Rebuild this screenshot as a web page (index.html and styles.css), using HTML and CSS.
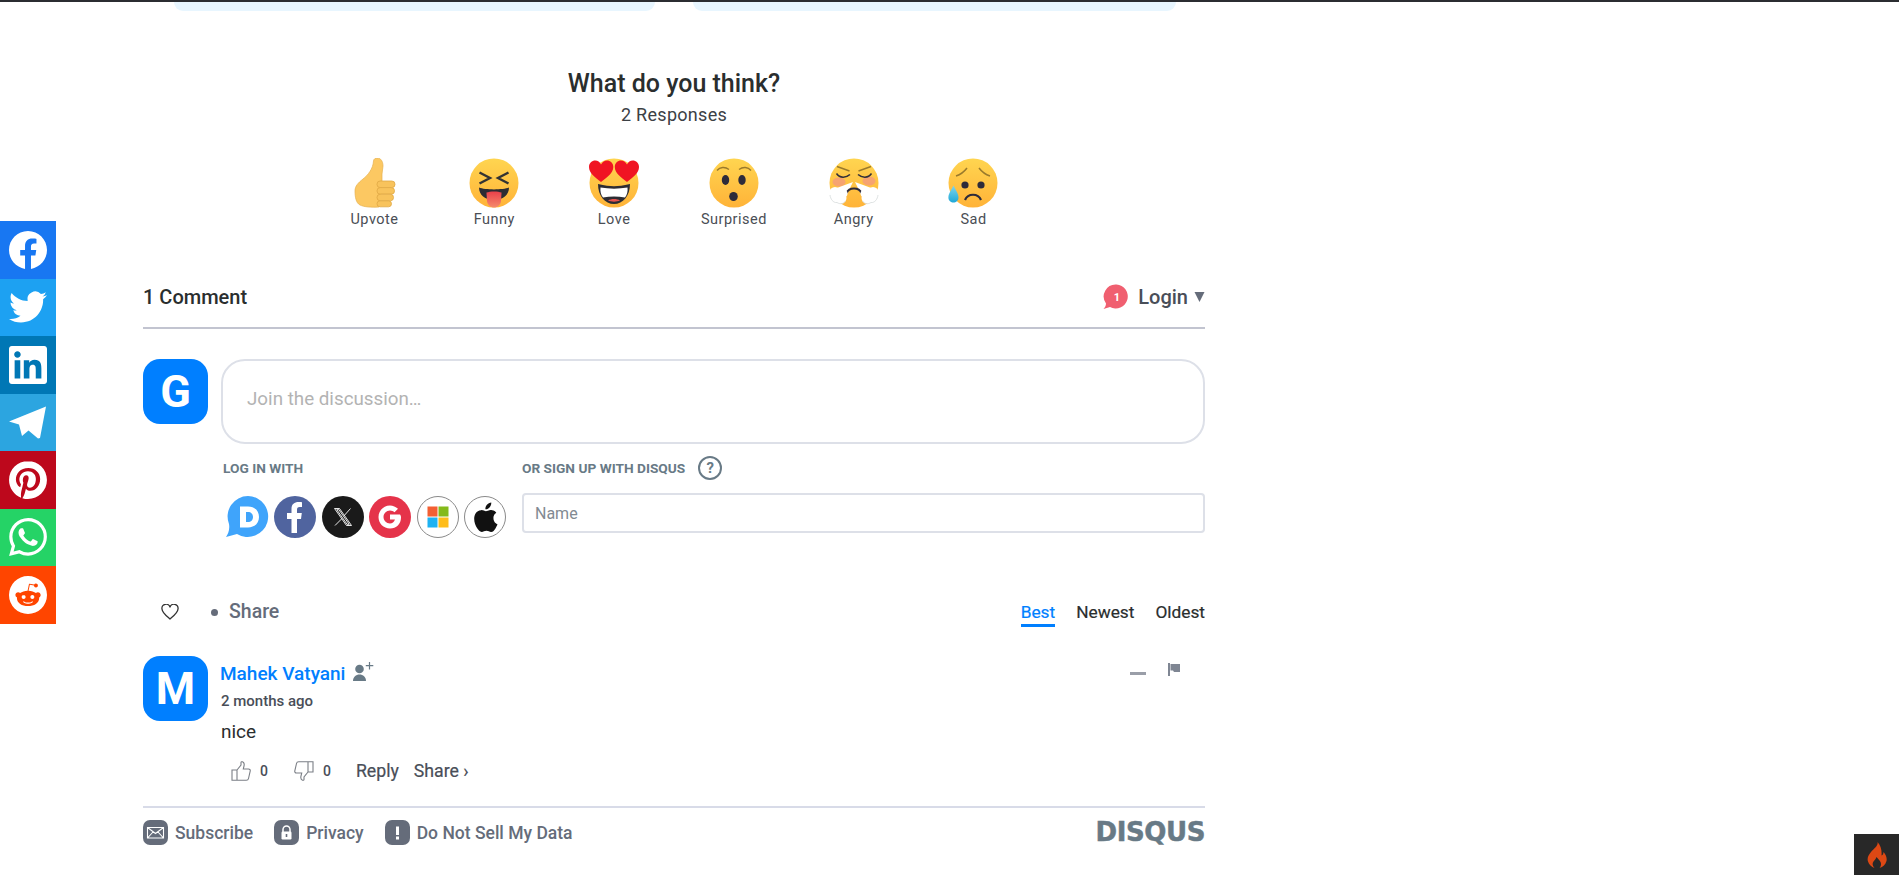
FILE: index.html
```html
<!DOCTYPE html>
<html lang="en">
<head>
<meta charset="utf-8">
<title>What do you think?</title>
<link rel="stylesheet" href="styles.css">
</head>
<body>
<svg class="defs" width="0" height="0" aria-hidden="true">
  <defs>
    <linearGradient id="face" x1="0" y1="0" x2="0" y2="1">
      <stop offset="0" stop-color="#ffd550"/>
      <stop offset="1" stop-color="#ffb338"/>
    </linearGradient>
    <linearGradient id="tongue" x1="0" y1="0" x2="0" y2="1">
      <stop offset="0" stop-color="#e8404a"/>
      <stop offset="1" stop-color="#f58a6c"/>
    </linearGradient>
    <linearGradient id="tear" x1="0" y1="0" x2="0" y2="1">
      <stop offset="0" stop-color="#7fd6ee"/>
      <stop offset="1" stop-color="#1fa8d8"/>
    </linearGradient>
  </defs>
</svg>

<div class="topbar"></div>

<aside class="share-rail">
  <a class="rail-item rail-fb"><svg viewBox="0 0 24 24"><path d="M24 12.073c0-6.627-5.373-12-12-12s-12 5.373-12 12c0 5.99 4.388 10.954 10.125 11.854v-8.385H7.078v-3.47h3.047V9.43c0-3.007 1.792-4.669 4.533-4.669 1.312 0 2.686.235 2.686.235v2.953H15.83c-1.491 0-1.956.925-1.956 1.874v2.25h3.328l-.532 3.47h-2.796v8.385C19.612 23.027 24 18.062 24 12.073z"/></svg></a>
  <a class="rail-item rail-tw"><svg viewBox="0 0 24 24"><path d="M23.953 4.57a10 10 0 01-2.825.775 4.958 4.958 0 002.163-2.723c-.951.555-2.005.959-3.127 1.184a4.92 4.92 0 00-8.384 4.482C7.69 8.095 4.067 6.13 1.64 3.162a4.822 4.822 0 00-.666 2.475c0 1.71.87 3.213 2.188 4.096a4.904 4.904 0 01-2.228-.616v.06a4.923 4.923 0 003.946 4.827 4.996 4.996 0 01-2.212.085 4.936 4.936 0 004.604 3.417 9.867 9.867 0 01-6.102 2.105c-.39 0-.779-.023-1.17-.067a13.995 13.995 0 007.557 2.209c9.053 0 13.998-7.496 13.998-13.985 0-.21 0-.42-.015-.63A9.935 9.935 0 0024 4.59z"/></svg></a>
  <a class="rail-item rail-li"><svg viewBox="0 0 24 24"><path d="M20.447 20.452h-3.554v-5.569c0-1.328-.027-3.037-1.852-3.037-1.853 0-2.136 1.445-2.136 2.939v5.667H9.351V9h3.414v1.561h.046c.477-.9 1.637-1.85 3.37-1.85 3.601 0 4.267 2.37 4.267 5.455v6.286zM5.337 7.433c-1.144 0-2.063-.926-2.063-2.065 0-1.138.92-2.063 2.063-2.063 1.14 0 2.064.925 2.064 2.063 0 1.139-.925 2.065-2.064 2.065zm1.782 13.019H3.555V9h3.564v11.452zM22.225 0H1.771C.792 0 0 .774 0 1.729v20.542C0 23.227.792 24 1.771 24h20.451C23.2 24 24 23.227 24 22.271V1.729C24 .774 23.2 0 22.222 0h.003z"/></svg></a>
  <a class="rail-item rail-tg"><svg viewBox="0 0 38 38"><path d="M37 3.500 0 18.500 10 21.500 13 33 19.500 27.500 29 35.500 31 35Z"/></svg></a>
  <a class="rail-item rail-pi"><svg viewBox="0 0 24 24"><path d="M12.017 0C5.396 0 .029 5.367.029 11.987c0 5.079 3.158 9.417 7.618 11.162-.105-.949-.199-2.403.041-3.439.219-.937 1.406-5.957 1.406-5.957s-.359-.72-.359-1.781c0-1.663.967-2.911 2.168-2.911 1.024 0 1.518.769 1.518 1.688 0 1.029-.653 2.567-.992 3.992-.285 1.193.6 2.165 1.775 2.165 2.128 0 3.768-2.245 3.768-5.487 0-2.861-2.063-4.869-5.008-4.869-3.41 0-5.409 2.562-5.409 5.199 0 1.033.394 2.143.889 2.741.099.12.112.225.085.345-.09.375-.293 1.199-.334 1.363-.053.225-.172.271-.401.165-1.495-.69-2.433-2.878-2.433-4.646 0-3.776 2.748-7.252 7.92-7.252 4.158 0 7.392 2.967 7.392 6.923 0 4.135-2.607 7.462-6.233 7.462-1.214 0-2.354-.629-2.758-1.379l-.749 2.848c-.269 1.045-1.004 2.352-1.498 3.146 1.123.345 2.306.535 3.55.535 6.607 0 11.985-5.365 11.985-11.987C23.97 5.39 18.592.026 11.985.026L12.017 0z"/></svg></a>
  <a class="rail-item rail-wa"><svg viewBox="0 0 24 24"><path d="M17.472 14.382c-.297-.149-1.758-.867-2.03-.967-.273-.099-.471-.148-.67.15-.197.297-.767.966-.94 1.164-.173.199-.347.223-.644.075-.297-.15-1.255-.463-2.39-1.475-.883-.788-1.48-1.761-1.653-2.059-.173-.297-.018-.458.13-.606.134-.133.298-.347.446-.52.149-.174.198-.298.298-.497.099-.198.05-.371-.025-.52-.075-.149-.669-1.612-.916-2.207-.242-.579-.487-.5-.669-.51-.173-.008-.371-.01-.57-.01-.198 0-.52.074-.792.372-.272.297-1.04 1.016-1.04 2.479 0 1.462 1.065 2.875 1.213 3.074.149.198 2.096 3.2 5.077 4.487.709.306 1.262.489 1.694.625.712.227 1.36.195 1.871.118.571-.085 1.758-.719 2.006-1.413.248-.694.248-1.289.173-1.413-.074-.124-.272-.198-.57-.347m-5.421 7.403h-.004a9.87 9.87 0 01-5.031-1.378l-.361-.214-3.741.982.998-3.648-.235-.374a9.86 9.86 0 01-1.51-5.26c.001-5.45 4.436-9.884 9.888-9.884 2.64 0 5.122 1.03 6.988 2.898a9.825 9.825 0 012.893 6.994c-.003 5.45-4.437 9.884-9.885 9.884m8.413-18.297A11.815 11.815 0 0012.05 0C5.495 0 .16 5.335.157 11.892c0 2.096.547 4.142 1.588 5.945L.057 24l6.305-1.654a11.882 11.882 0 005.683 1.448h.005c6.554 0 11.89-5.335 11.893-11.893a11.821 11.821 0 00-3.48-8.413Z"/></svg></a>
  <a class="rail-item rail-re"><svg viewBox="0 0 24 24"><path d="M12 0A12 12 0 0 0 0 12a12 12 0 0 0 12 12 12 12 0 0 0 12-12A12 12 0 0 0 12 0zm5.01 4.744c.688 0 1.25.561 1.25 1.249a1.25 1.25 0 0 1-2.498.056l-2.597-.547-.8 3.747c1.824.07 3.48.632 4.674 1.488.308-.309.73-.491 1.207-.491.968 0 1.754.786 1.754 1.754 0 .716-.435 1.333-1.01 1.614a3.111 3.111 0 0 1 .042.52c0 2.694-3.13 4.87-7.004 4.87-3.874 0-7.004-2.176-7.004-4.87 0-.183.015-.366.043-.534A1.748 1.748 0 0 1 4.028 12c0-.968.786-1.754 1.754-1.754.463 0 .898.196 1.207.49 1.207-.883 2.878-1.43 4.744-1.487l.885-4.182a.342.342 0 0 1 .14-.197.35.35 0 0 1 .238-.042l2.906.617a1.214 1.214 0 0 1 1.108-.701zM9.25 12C8.561 12 8 12.562 8 13.25c0 .687.561 1.248 1.25 1.248.687 0 1.248-.561 1.248-1.249 0-.688-.561-1.249-1.249-1.249zm5.5 0c-.687 0-1.248.561-1.248 1.25 0 .687.561 1.248 1.249 1.248.688 0 1.249-.561 1.249-1.249 0-.687-.562-1.249-1.25-1.249zm-5.466 3.99a.327.327 0 0 0-.231.094.33.33 0 0 0 0 .463c.842.842 2.484.913 2.961.913.477 0 2.105-.056 2.961-.913a.361.361 0 0 0 .029-.463.33.33 0 0 0-.464 0c-.547.533-1.684.73-2.512.73-.828 0-1.979-.196-2.512-.73a.326.326 0 0 0-.232-.095z"/></svg></a>
</aside>

<main class="column">
  <div class="cards">
    <div class="card"></div>
    <div class="card"></div>
  </div>

  <section class="reactions">
    <h2 class="reactions-title">What do you think?</h2>
    <p class="reactions-count">2 Responses</p>
    <div class="reaction-row">
      <div class="reaction">
        <svg class="emoji" viewBox="0 0 50 50">
          <path d="M23.500 3C23.500 1 25.500 0 27.500 0 30.500 0 33 3 33 8L32 16 32 24 29 49C21 49.500 14 49 10 47 6 45 5 39 5 33 5 28 8 25 13 21 18 17 23 11 23.500 3Z" fill="#fcc862" stroke="#e5b04f" stroke-width=".7"/>
          <rect x="27" y="23" width="18" height="6.600" rx="3.200" fill="#f8c35c" stroke="#e0a845" stroke-width=".8"/>
          <rect x="27" y="29.600" width="17.500" height="6.600" rx="3.200" fill="#f8c35c" stroke="#e0a845" stroke-width=".8"/>
          <rect x="27" y="36.200" width="16.500" height="6.600" rx="3.200" fill="#f8c35c" stroke="#e0a845" stroke-width=".8"/>
          <rect x="27" y="42.800" width="14.500" height="6" rx="3" fill="#f8c35c" stroke="#e0a845" stroke-width=".8"/>
        </svg>
        <span class="reaction-label">Upvote</span>
      </div>
      <div class="reaction">
        <svg class="emoji" viewBox="0 0 50 50">
          <circle cx="25" cy="25" r="24.500" fill="url(#face)"/>
          <path d="M10.500 14.500 21 20 10.500 25.500M39.500 14.500 29 20 39.500 25.500" fill="none" stroke="#333" stroke-width="2.400"/>
          <path d="M10 29.500C16 32 34 32 40 29.500 40 37 34 42 25 42 16 42 10 37 10 29.500Z" fill="#2c2c33"/>
          <path d="M17.500 34.500C21 33 29 33 32.500 34.500L32 43C31.500 47 28.500 49.500 25 49.500 21.500 49.500 18.500 47 18 43Z" fill="url(#tongue)"/>
        </svg>
        <span class="reaction-label">Funny</span>
      </div>
      <div class="reaction">
        <svg class="emoji" viewBox="0 0 50 50">
          <circle cx="25" cy="25" r="24.500" fill="url(#face)"/>
          <path d="M9 26C23 29 27 29 41 26 41 38 34 46 25 46 16 46 9 38 9 26Z" fill="#2c2c33"/>
          <path d="M11.500 29.500C20 31 30 31 38.500 29.500 39 33 38 37 36 39.500 29 38 21 38 14 39.500 12 37 11 33 11.500 29.500Z" fill="#fff"/>
          <path d="M19 42.500C22 40.500 28 40.500 31 42.500 28 44 22 44 19 42.500Z" fill="#e5524e"/>
          <path d="M12 24C6 19.500 0 15 0 9 0 5 3 2.500 6.300 2.500 8.800 2.500 10.800 4 12 6.500 13.500 4 15.500 2.500 18 2.500 21.300 2.500 24.300 5 24.300 9 24.300 15 18 19.500 12 24Z" fill="#f01423"/>
          <path d="M38 24C32 19.500 25.800 15 25.800 9 25.800 5 28.700 2.500 32 2.500 34.500 2.500 36.500 4 38 6.500 39.200 4 41.200 2.500 43.700 2.500 47 2.500 50 5 50 9 50 15 44 19.500 38 24Z" fill="#f01423"/>
        </svg>
        <span class="reaction-label">Love</span>
      </div>
      <div class="reaction">
        <svg class="emoji" viewBox="0 0 50 50">
          <circle cx="25" cy="25" r="24.500" fill="url(#face)"/>
          <path d="M8 12.500C11 9 16 8.500 20 11.500M30 11.500C34 8.500 39 9 42 12.500" fill="none" stroke="#9a7a2c" stroke-width="1.400"/>
          <ellipse cx="16.500" cy="22" rx="3.700" ry="5" fill="#2e2b3a"/>
          <ellipse cx="33" cy="22" rx="3.700" ry="5" fill="#2e2b3a"/>
          <ellipse cx="24.500" cy="38.500" rx="4.300" ry="4.500" fill="#2e2b3a"/>
        </svg>
        <span class="reaction-label">Surprised</span>
      </div>
      <div class="reaction">
        <svg class="emoji" viewBox="0 0 50 50">
          <circle cx="25" cy="25" r="24.500" fill="url(#face)"/>
          <ellipse cx="10" cy="24" rx="6.500" ry="4.500" fill="#f49b7c" opacity=".8"/>
          <ellipse cx="40" cy="23" rx="6.500" ry="4.500" fill="#f49b7c" opacity=".8"/>
          <path d="M8 8.500 20.500 13M42 8.500 29.500 13" fill="none" stroke="#9a7a2c" stroke-width="1.400"/>
          <path d="M7.500 15.500C11 20.500 17 20 21 16.500M42.500 15.500C39 20.500 33 20 29 16.500" fill="none" stroke="#33303a" stroke-width="1.600"/>
          <path d="M24 24 5 31 17 38ZM26 24 45 31 33 38Z" fill="#fff"/>
          <path d="M17.500 35C20 29 30 29 32.500 35" fill="none" stroke="#2e2b3a" stroke-width="2"/>
          <g fill="#fff">
            <circle cx="6" cy="34.500" r="5.500"/><circle cx="12" cy="40" r="5.500"/><circle cx="5.500" cy="40.500" r="5"/><circle cx="15" cy="35.500" r="3.500"/>
            <circle cx="44" cy="34.500" r="5.500"/><circle cx="38" cy="40" r="5.500"/><circle cx="44.500" cy="40.500" r="5"/><circle cx="35" cy="35.500" r="3.500"/>
          </g>
          <path d="M1 37C1.500 41 4 45 8 44.500 11 46.500 14.500 46 16.500 43M49 37C48.500 41 46 45 42 44.500 39 46.500 35.500 46 33.500 43" fill="none" stroke="#d5dadb" stroke-width=".8"/>
        </svg>
        <span class="reaction-label">Angry</span>
      </div>
      <div class="reaction">
        <svg class="emoji" viewBox="0 0 50 50">
          <circle cx="25" cy="25" r="24.500" fill="url(#face)"/>
          <path d="M8 18C11 17 16 14 19 10M42 18C39 17 34 14 31 10" fill="none" stroke="#9a7a2c" stroke-width="1.500"/>
          <circle cx="17" cy="27" r="3.600" fill="#2e2b3a"/>
          <circle cx="33" cy="27" r="3.600" fill="#2e2b3a"/>
          <path d="M17 42C20 35 30 35 33 42" fill="none" stroke="#2e2b3a" stroke-width="2.200"/>
          <path d="M5.500 27.500C7 31 10.500 35 10.500 39.500 10.500 42.800 8 44.500 5.500 44.500 3 44.500.4 42.800.4 39.500.4 35 4 31 5.500 27.500Z" fill="url(#tear)"/>
        </svg>
        <span class="reaction-label">Sad</span>
      </div>
    </div>
  </section>

  <header class="thread-head">
    <span class="thread-count">1 Comment</span>
    <div class="thread-login">
      <svg class="notice" viewBox="0 0 26 26"><path d="M13.500 0.500A12 12 0 1 1 7 23L.5 25C2 23.500 3 21.500 3 19.500A12 12 0 0 1 13.500.5Z" fill="#f05f70"/></svg>
      <span class="notice-num">1</span>
      <span class="login-text">Login</span>
      <svg class="login-arrow" viewBox="0 0 10 10"><path d="M0 0H10L5 10Z"/></svg>
    </div>
  </header>

  <section class="composer">
    <div class="avatar">G</div>
    <div class="composer-box">Join the discussion…</div>
  </section>

  <section class="signin">
    <div class="signin-login">
      <div class="signin-label">LOG IN WITH</div>
      <div class="signin-icons">
        <svg class="provider provider-disqus" viewBox="0 0 42 42"><path d="M22 0A20.500 20.500 0 1 1 11 38L0 41C2 38 4 34 3 28A20.500 20.500 0 0 1 22 0Z" fill="#3fa4fb"/><path d="M14 10.500H22C29 10.500 33 15 33 21 33 27 29 31.500 22 31.500H14ZM20 16V26H22C25 26 27 24 27 21 27 18 25 16 22 16Z" fill="#fff" fill-rule="evenodd"/></svg>
        <svg class="provider" viewBox="0 0 42 42"><circle cx="21" cy="21" r="21" fill="#50649f"/><path d="M17.500 37V23H13V17H17.500V13C17.500 8 20.500 6 24.500 6 26.500 6 28 6.200 28 6.200V11H25.800C23.500 11 23 12.300 23 14V17H27.800L27 23H23V37Z" fill="#fff"/></svg>
        <svg class="provider" viewBox="0 0 42 42"><circle cx="21" cy="21" r="21" fill="#1a1a1a"/><path d="M12.500 12.500H17.500L29.500 29.500H24.500ZM14.800 13.700 25.100 28.300H27.200L16.900 13.700ZM28.500 12.500 22 19.800M19.800 22.700 13 29.500" fill="none" stroke="#fff" stroke-width=".9"/></svg>
        <svg class="provider" viewBox="0 0 42 42"><circle cx="21" cy="21" r="21" fill="#e5334a"/><path d="M31 18.500H21V23.500H26C25 26 23.300 27.500 21 27.500 17.300 27.500 14.500 24.500 14.500 21 14.500 17.500 17.300 14.500 21 14.500 22.800 14.500 24.300 15.200 25.500 16.300L29 12.800C26.800 10.800 24 9.500 21 9.500 14.600 9.500 9.500 14.600 9.500 21 9.500 27.400 14.600 32.500 21 32.500 27.400 32.500 32 28 32 21.500 32 20.500 31.800 19.500 31 18.500Z" fill="#fff"/></svg>
        <svg class="provider" viewBox="0 0 42 42"><circle cx="21" cy="21" r="20.500" fill="#fff" stroke="#8a8a8a"/><rect x="10.500" y="10.500" width="10" height="10" fill="#f35f33"/><rect x="21.500" y="10.500" width="10" height="10" fill="#84ba1a"/><rect x="10.500" y="21.500" width="10" height="10" fill="#1eb2f2"/><rect x="21.500" y="21.500" width="10" height="10" fill="#ffbd1a"/></svg>
        <svg class="provider" viewBox="0 0 42 42"><circle cx="21" cy="21" r="20.500" fill="#fff" stroke="#8a8a8a"/><path transform="translate(-5.500 -5.300) scale(1.270)" d="M27.500 21.500C27.500 18.800 29.700 17.500 29.800 17.400 28.500 15.500 26.500 15.300 25.800 15.200 24.100 15 22.500 16.200 21.600 16.200 20.700 16.200 19.300 15.200 17.900 15.300 16 15.300 14.300 16.400 13.300 18.100 11.300 21.600 12.800 26.800 14.700 29.600 15.700 31 16.800 32.500 18.300 32.500 19.700 32.400 20.300 31.600 22 31.600 23.700 31.600 24.200 32.500 25.700 32.500 27.200 32.400 28.200 31.100 29.100 29.700 30.200 28.100 30.700 26.600 30.700 26.500 30.700 26.500 27.500 25.300 27.500 21.500ZM24.600 13C25.400 12 25.900 10.700 25.800 9.300 24.600 9.400 23.200 10.100 22.400 11.100 21.700 12 21 13.300 21.200 14.600 22.500 14.700 23.800 14 24.600 13Z" fill="#111"/></svg>
      </div>
    </div>
    <div class="signin-guest">
      <div class="signin-label guest-label">OR SIGN UP WITH DISQUS <span class="help">?</span></div>
      <div class="name-field">Name</div>
    </div>
  </section>

  <nav class="toolbar">
    <div class="toolbar-left">
      <svg class="heart" viewBox="0 0 18 16"><path d="M9 15C5 11.500 1 8.500 1 5A4 4 0 0 1 9 3.500 4 4 0 0 1 17 5C17 8.500 13 11.500 9 15Z" fill="none" stroke="#333" stroke-width="1.300"/></svg>
      <span class="dot"></span>
      <span class="toolbar-share">Share</span>
    </div>
    <div class="tabs">
      <span class="tab tab-active">Best</span>
      <span class="tab">Newest</span>
      <span class="tab">Oldest</span>
    </div>
  </nav>

  <article class="comment">
    <div class="avatar">M</div>
    <div class="comment-body">
      <div class="comment-author">
        <span class="author-name">Mahek Vatyani</span>
        <svg class="follow" viewBox="0 0 21 20"><circle cx="6.500" cy="7" r="4.300" fill="#687a86"/><path d="M0 19C0 15 3 12.500 6.500 12.500 10 12.500 13 15 13 19Z" fill="#687a86"/><path d="M16.500 0V7.500M12.800 3.700H20.300" stroke="#687a86" stroke-width="1.200"/></svg>
      </div>
      <div class="comment-time">2 months ago</div>
      <p class="comment-text">nice</p>
      <div class="comment-actions">
        <svg class="vote" viewBox="0 0 20 20"><path d="M6 9 10 4V1.500C10 .8 10.800.500 11.500.800 13 1.500 13.500 3 13 5L12.300 8H17.500C18.800 8 19.500 9 19.200 10.200L17.500 17.500C17.300 18.600 16.500 19.300 15.300 19.300H6ZM1 9H6V19.300H1Z" fill="none" stroke="#7b7f86" stroke-width="1.100"/></svg>
        <span class="vote-count">0</span>
        <svg class="vote vote-down" viewBox="0 0 20 20"><path d="M6 9 10 4V1.500C10 .8 10.800.500 11.500.800 13 1.500 13.500 3 13 5L12.300 8H17.500C18.800 8 19.500 9 19.200 10.200L17.500 17.500C17.300 18.600 16.500 19.300 15.300 19.300H6ZM1 9H6V19.300H1Z" fill="none" stroke="#7b7f86" stroke-width="1.100"/></svg>
        <span class="vote-count">0</span>
        <span class="action action-reply">Reply</span>
        <span class="action">Share ›</span>
      </div>
    </div>
    <div class="comment-tools">
      <span class="minus"></span>
      <svg class="flag" viewBox="0 0 12 13"><path d="M0 0H2V13H0ZM2.500 1H12V9H6L5 7.500H2.500Z" fill="#7f8693"/></svg>
    </div>
  </article>

  <footer class="thread-foot">
    <div class="foot-links">
      <span class="foot-link">
        <svg class="foot-icon" viewBox="0 0 25 25"><rect width="25" height="25" rx="7" fill="#656c7a"/><path d="M4.500 7.500H20.500V18H4.500ZM4.500 7.500 12.500 13.500 20.500 7.500M4.500 18 10 12M20.500 18 15 12" fill="none" stroke="#fff" stroke-width="1.100"/></svg>
        Subscribe
      </span>
      <span class="foot-link">
        <svg class="foot-icon" viewBox="0 0 25 25"><rect width="25" height="25" rx="7" fill="#656c7a"/><path d="M9 12V9.500A3.500 3.500 0 0 1 16 9.500V12" fill="none" stroke="#fff" stroke-width="1.500"/><rect x="7.500" y="11.500" width="10" height="8" rx="1.200" fill="#fff"/><rect x="11.700" y="14" width="1.600" height="3" fill="#656c7a"/></svg>
        Privacy
      </span>
      <span class="foot-link">
        <svg class="foot-icon" viewBox="0 0 25 25"><rect width="25" height="25" rx="7" fill="#656c7a"/><rect x="11" y="6.500" width="3" height="8.500" fill="#fff"/><rect x="11" y="16.500" width="3" height="3" fill="#fff"/></svg>
        Do Not Sell My Data
      </span>
    </div>
    <span class="foot-logo">DISQUS</span>
  </footer>
</main>

<a class="ci-badge"><svg viewBox="0 0 20 26"><path d="M10.500 0C11.500 4 7 6.500 4 10 1 13.500 0 16.500 1 19.500 2 22.500 4.500 25 7.500 26 5.500 24 5 21.500 6.500 19.500 7.500 18 9 17 9.500 15 11.500 17 12.500 18.500 13.500 20 14.500 22 14 24.500 12.500 26 16 25 18.500 22.500 19.500 19 20.300 15.500 18.500 12 16.500 10 16.500 11.500 16 13 14.500 13.500 15 9 14 3.500 10.500 0Z" fill="#dd4814"/></svg></a>
</body>
</html>
```

FILE: styles.css
```css
* { box-sizing: border-box; }

html, body { margin: 0; padding: 0; background: #fff; }

body {
  font-family: Roboto, "Liberation Sans", sans-serif;
  color: #2a2e2e;
  height: 875px;
  overflow: hidden;
}

.defs { position: absolute; }

.topbar { height: 2px; background: #2b2d31; }

/* fixed share rail */
.share-rail {
  position: fixed;
  left: 0;
  top: 221px;
  width: 56px;
  display: flex;
  flex-direction: column;
}

.rail-item {
  height: 57.5px;
  display: flex;
  align-items: center;
  justify-content: center;
}

.rail-item svg { width: 38px; height: 38px; fill: #fff; }

.rail-fb { background: #1877f2; }
.rail-tw { background: #1da1f2; }
.rail-li { background: #0077b5; }
.rail-tg { background: #2ca5e0; }
.rail-pi { background: #bd081c; }
.rail-wa { background: #25d366; }
.rail-re { background: #ff4500; }

/* main column */
.column {
  width: 1062px;
  margin-left: 143px;
}

.cards {
  display: grid;
  grid-template-columns: 481px 483px;
  column-gap: 38px;
  padding-left: 31px;
}

.card {
  height: 9px;
  background: #e8f6ff;
  border-radius: 0 0 12px 12px;
}

/* reactions */
.reactions {
  display: flex;
  flex-direction: column;
  align-items: center;
}

.reactions-title {
  margin: 59px 0 0;
  font-size: 25px;
  line-height: 28px;
  font-weight: 500;
  color: #2a2e2e;
  text-align: center;
}

.reactions-count {
  margin: 6px 0 0;
  font-size: 18px;
  line-height: 22px;
  color: #3c4045;
  letter-spacing: .3px;
}

.reaction-row {
  display: flex;
  margin-top: 32px;
}

.reaction {
  width: 119.800px;
  display: flex;
  flex-direction: column;
  align-items: center;
}

.emoji { width: 50px; height: 50px; display: block; }

.reaction-label {
  margin-top: 4px;
  font-size: 14.500px;
  line-height: 16px;
  letter-spacing: .5px;
  color: #4a4e55;
}

/* thread header */
.thread-head {
  margin-top: 39px;
  height: 62px;
  border-bottom: 2px solid #c2c4d0;
  display: flex;
  align-items: center;
  justify-content: space-between;
}

.thread-count { font-size: 20px; font-weight: 500; color: #2a2e2e; }

.thread-login { position: relative; display: flex; align-items: center; }

.notice { width: 26px; height: 26px; display: block; }

.notice-num {
  position: absolute;
  left: 0;
  top: 50%;
  width: 27px;
  transform: translateY(-50%);
  text-align: center;
  color: #fff;
  font-size: 11px;
  font-weight: 700;
}

.login-text {
  margin-left: 9px;
  font-size: 20px;
  font-weight: 500;
  color: #494e58;
}

.login-arrow { width: 11px; height: 10px; margin-left: 6px; fill: #656c7a; }

/* composer */
.composer {
  margin-top: 30px;
  display: flex;
  gap: 13px;
}

.avatar {
  flex: none;
  width: 65px;
  height: 65px;
  border-radius: 17px;
  background: #007fff;
  color: #fff;
  font-size: 45px;
  font-weight: 700;
  line-height: 65px;
  text-align: center;
}

.composer-box {
  flex: 1;
  height: 85px;
  border: 2px solid #dde0e8;
  border-radius: 24px;
  padding: 26px 24px;
  font-size: 18.800px;
  line-height: 24px;
  color: #b3b3b3;
}

.signin {
  display: flex;
  margin: 16px 0 0 80px;
}

.signin-login { width: 299px; }

.signin-label {
  font-size: 13.700px;
  line-height: 16px;
  font-weight: 700;
  color: #687a86;
  white-space: nowrap;
}

.signin-icons {
  display: flex;
  gap: 5.400px;
  margin: 20px 0 0 4px;
}

.provider { width: 42px; height: 42px; display: block; flex: none; overflow: visible; }

.provider-disqus { transform: translateX(-1px); }

.signin-guest { flex: 1; }

.guest-label { display: flex; align-items: center; gap: 13px; height: 16px; }

.help {
  width: 24px;
  height: 24px;
  border: 2px solid #687a86;
  border-radius: 50%;
  font-size: 15px;
  line-height: 20px;
  text-align: center;
  font-weight: 700;
}

.name-field {
  margin-top: 17px;
  height: 40px;
  border: 2px solid #dde0e8;
  border-radius: 4px;
  padding: 0 11px;
  font-size: 16px;
  line-height: 37px;
  color: #828a92;
}

/* toolbar */
.toolbar {
  margin-top: 62px;
  display: flex;
  justify-content: space-between;
}

.toolbar-left { display: flex; align-items: center; height: 24px; padding-left: 18px; }

.heart { width: 18px; height: 16px; display: block; }

.dot {
  width: 7px;
  height: 7px;
  border-radius: 50%;
  background: #656c7a;
  margin-left: 32px;
}

.toolbar-share {
  margin-left: 11px;
  font-size: 19.500px;
  font-weight: 500;
  line-height: 24px;
  color: #656c7a;
}

.tabs { display: flex; gap: 21px; }

.tab {
  font-size: 17.300px;
  font-weight: 400;
  line-height: 24px;
  height: 27px;
  color: #2a2e2e;
  -webkit-text-stroke: .2px #2a2e2e;
}

.tab-active { color: #007fff; border-bottom: 3px solid #007fff; -webkit-text-stroke: .2px #007fff; }

/* comment */
.comment {
  margin-top: 29px;
  display: flex;
  gap: 13px;
}

.comment-body { flex: 1; padding-top: 5px; }

.comment-author { display: flex; align-items: center; height: 24px; margin-left: -1px; }

.author-name { font-size: 19px; font-weight: 500; color: #007fff; }

.follow { width: 21px; height: 20px; margin: -3px 0 0 8px; display: block; }

.comment-time {
  margin-top: 7px;
  font-size: 15px;
  line-height: 18px;
  font-weight: 500;
  color: #494e58;
}

.comment-text {
  margin: 10px 0 0;
  font-size: 19px;
  line-height: 24px;
  color: #2a2e2e;
}

.comment-actions {
  margin-top: 14.500px;
  height: 24px;
  display: flex;
  align-items: center;
  padding-left: 10px;
  font-size: 17.700px;
}

.vote { width: 20px; height: 20px; display: block; flex: none; }

.vote-down { transform: scale(-1, -1); margin-left: 26px; }

.vote-count {
  margin-left: 9px;
  font-size: 14px;
  font-weight: 500;
  color: #494e58;
}

.action { font-weight: 400; color: #494e58; margin-left: 15px; -webkit-text-stroke: .2px #494e58; }

.action-reply { margin-left: 25px; }

.comment-tools {
  display: flex;
  gap: 22px;
  padding: 7px 25px 0 0;
  align-items: flex-start;
}

.minus {
  width: 16px;
  height: 3px;
  margin-top: 9px;
  background: #9a9ea8;
}

.flag { width: 12px; height: 13px; display: block; }

/* footer */
.thread-foot {
  margin-top: 23.500px;
  border-top: 2px solid #d8dbe8;
  padding-top: 12px;
  display: flex;
  justify-content: space-between;
  align-items: center;
}

.foot-links { display: flex; gap: 21px; }

.foot-link {
  display: flex;
  align-items: center;
  gap: 7px;
  font-size: 17.500px;
  font-weight: 500;
  color: #656c7a;
}

.foot-icon { width: 25px; height: 25px; display: block; flex: none; }

.foot-logo {
  font-family: "DejaVu Sans", Lato, sans-serif;
  font-weight: 700;
  font-size: 26px;
  line-height: 25px;
  letter-spacing: -.4px;
  color: #687a86;
  -webkit-text-stroke: .5px #687a86;
}

.ci-badge {
  position: fixed;
  right: 0;
  bottom: 0;
  width: 45px;
  height: 41px;
  background: #282828;
  display: flex;
  align-items: center;
  justify-content: center;
}

.ci-badge svg { width: 20px; height: 26px; display: block; }
```
